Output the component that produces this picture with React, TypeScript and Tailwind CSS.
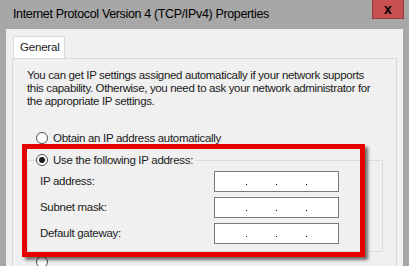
import React from "react";

const IpField = () => (
  <div className="w-[125px] h-[21px] bg-white border border-[#7a7a7a] flex items-end justify-center gap-[29px] pb-[6px]">
    <span className="w-px h-px bg-black" />
    <span className="w-px h-px bg-black" />
    <span className="w-px h-px bg-black" />
  </div>
);

const Radio = ({ checked }: { checked?: boolean }) => (
  <span className="w-[12px] h-[12px] rounded-full border border-[#4d4d4d] bg-white flex items-center justify-center shrink-0">
    {checked && <span className="w-[6px] h-[6px] rounded-full bg-[#1a1a1a]" />}
  </span>
);

export default function App() {
  return (
    <div
      className="w-[409px] h-[266px] bg-[#a7a7a7] overflow-hidden relative flex flex-col text-[#1a1a1a]"
      style={{ fontFamily: '"Segoe UI", "Liberation Sans", Arial, sans-serif' }}
    >
      {/* Title bar */}
      <div className="h-[29px] flex items-start justify-between shrink-0">
        <span className="pl-[13px] pt-[5px] text-[12.5px] leading-[18px] text-black tracking-[-0.35px]">
          Internet Protocol Version 4 (TCP/IPv4) Properties
        </span>
        <div className="w-[32px] h-[19px] mr-[5px] bg-[#c75050] border border-[#9e3a3a] border-t-0 flex items-center justify-center">
          <span className="text-[14px] font-bold leading-none text-black">x</span>
        </div>
      </div>

      {/* Body */}
      <div className="mx-[6px] flex-1 bg-[#f0f0f0] pt-[7px] pl-[6px] pr-[6px]">
        <div className="flex">
          <div className="w-[52px] h-[22px] bg-white border border-[#d9d9d9] border-b-0 flex items-center pl-[6px] ml-px text-[11.5px] tracking-[-0.2px]">
            General
          </div>
        </div>
        <div className="border border-[#d9d9d9] bg-[#f0f0f0] h-[220px] pl-[14px] pt-[10px]">
          <p className="text-[11.5px] leading-[13px] w-[346px] tracking-[-0.35px]">
            You can get IP settings assigned automatically if your network supports this capability. Otherwise, you need to ask your network administrator for the appropriate IP settings.
          </p>
          <div className="flex items-center gap-[5px] pl-[9px] mt-[23px] text-[11.5px] leading-[14px]">
            <Radio />
            <span className="tracking-[-0.3px]">Obtain an IP address automatically</span>
          </div>

          {/* Group: static address */}
          <div className="relative mt-[8px] w-[356px]">
            <div className="absolute left-0 right-0 top-[7px] h-[92px] border border-[#dcdcdc]" />
            <div className="relative flex items-center pl-[9px] text-[11.5px] leading-[14px]">
              <span className="flex items-center gap-[5px] bg-[#f0f0f0] pr-[3px]">
                <Radio checked />
                <span className="tracking-[-0.3px]">Use the following IP address:</span>
              </span>
            </div>
            <div className="relative flex flex-col gap-[5px] pt-[4px] pl-[13px] text-[11.5px]">
              {["IP address:", "Subnet mask:", "Default gateway:"].map((label) => (
                <div key={label} className="flex items-center justify-between pr-[44px]">
                  <span className="tracking-[-0.3px]">{label}</span>
                  <IpField />
                </div>
              ))}
            </div>
          </div>
          <div className="flex items-center pl-[9px] mt-[12px]">
            <Radio />
          </div>
        </div>
      </div>

      {/* Red highlight overlay */}
      <div className="absolute left-[22px] top-[144px] w-[343px] h-[113px] border-[5px] border-[#e60000] shadow-[3px_3px_3px_rgba(0,0,0,0.55)]" />
    </div>
  );
}
